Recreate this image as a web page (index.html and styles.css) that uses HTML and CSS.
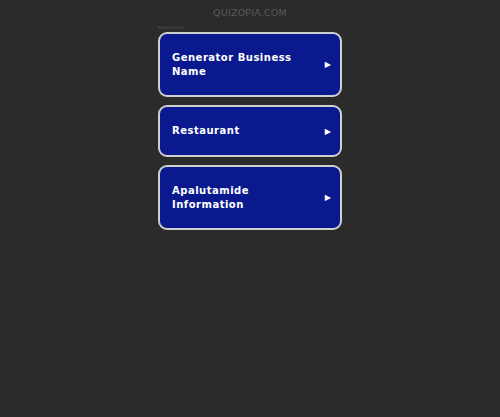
FILE: index.html
```html
<!DOCTYPE html>
<html>
<head>
<meta charset="utf-8">
<link rel="stylesheet" href="styles.css">
</head>
<body>
<div class="page">
  <div class="site">QUIZOPIA.COM</div>
  <div class="links">
    <div class="label">Related Links</div>
    <a class="card tall" href="#"><span class="text">Generator Business Name</span><span class="arrow">&#9654;</span></a>
    <a class="card" href="#"><span class="text">Restaurant</span><span class="arrow">&#9654;</span></a>
    <a class="card tall" href="#"><span class="text">Apalutamide Information</span><span class="arrow">&#9654;</span></a>
  </div>
</div>
</body>
</html>
```
FILE: styles.css
```css
html, body {
  margin: 0;
  padding: 0;
  background: #2b2b2b;
  height: 100%;
}
.page {
  display: flex;
  flex-direction: column;
  align-items: center;
  font-family: "DejaVu Sans", sans-serif;
}
.site {
  margin-top: 7px;
  font-size: 9.5px;
  line-height: 11px;
  color: #5a5a5a;
  letter-spacing: 0.2px;
}
.links {
  width: 184px;
  display: flex;
  flex-direction: column;
  gap: 8px;
  margin-top: 8px;
}
.label {
  font-size: 4px;
  line-height: 4px;
  color: #555;
  margin-bottom: -6px;
}
.card {
  box-sizing: border-box;
  display: flex;
  align-items: center;
  justify-content: space-between;
  background: #0a1a8e;
  border: 2px solid #cfcfcf;
  border-radius: 9px;
  padding: 0 9px 0 12px;
  height: 52px;
  text-decoration: none;
  color: #fff;
}
.card.tall {
  height: 65px;
}
.text {
  font-size: 10px;
  font-weight: 600;
  line-height: 14px;
  max-width: 140px;
  letter-spacing: 0.5px;
}
.arrow {
  font-size: 8px;
  color: #fff;
}
```
